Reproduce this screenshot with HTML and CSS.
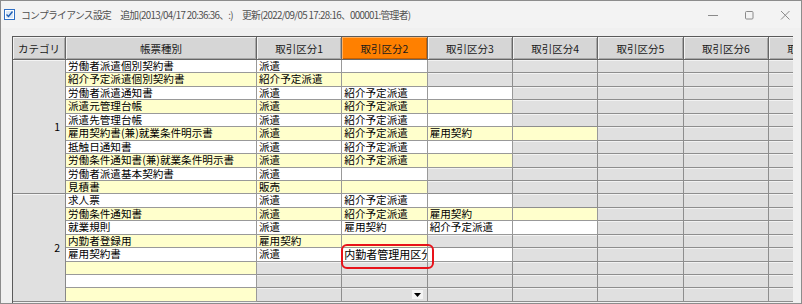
FILE: index.html
```html
<!DOCTYPE html>
<html lang="ja">
<head>
<meta charset="utf-8">
<title>コンプライアンス設定</title>
<link rel="stylesheet" href="styles.css">
</head>
<body>
<div class="window">
  <div class="titlebar">
    <svg class="app-icon" width="11" height="11" viewBox="0 0 11 11">
      <rect x="0.5" y="0.5" width="10" height="10" fill="#ffffff" stroke="#2f6fc4"/>
      <rect x="2" y="2" width="7" height="7" fill="#dbe8f7"/>
      <path d="M2.5 5.5 L4.5 7.5 L8.5 2.5" fill="none" stroke="#1f5fb4" stroke-width="1.4"/>
    </svg>
    <span class="title">コンプライアンス設定　追加(2013/04/17 20:36:36、:)　更新(2022/09/05 17:28:16、000001:管理者)</span>
    <div class="controls">
      <svg width="10" height="10" viewBox="0 0 10 10"><path d="M0 5.5 H10" stroke="#8a8a8a" stroke-width="1"/></svg>
      <svg width="10" height="10" viewBox="0 0 10 10"><rect x="1.5" y="1.5" width="7.5" height="7.5" rx="1" fill="none" stroke="#8a8a8a"/></svg>
      <svg width="10" height="10" viewBox="0 0 10 10"><path d="M1 1 L9.5 9.5 M9.5 1 L1 9.5" stroke="#8a8a8a" stroke-width="1"/></svg>
    </div>
  </div>
  <div class="content">
    <div class="gridwrap">
      <div class="grid">
        <div class="h">カテゴリ</div>
        <div class="h">帳票種別</div>
        <div class="h">取引区分1</div>
        <div class="h hi">取引区分2</div>
        <div class="h">取引区分3</div>
        <div class="h">取引区分4</div>
        <div class="h">取引区分5</div>
        <div class="h">取引区分6</div>
        <div class="h">取引区分7</div>

        <div class="cat cat1">1</div>
        <div class="cat cat2">2</div>

        <div class="c w">労働者派遣個別契約書</div><div class="c w">派遣</div><div class="c w"></div><div class="c g"></div><div class="c g"></div><div class="c g"></div><div class="c g"></div><div class="c g"></div>
        <div class="c y">紹介予定派遣個別契約書</div><div class="c y">紹介予定派遣</div><div class="c y"></div><div class="c g"></div><div class="c g"></div><div class="c g"></div><div class="c g"></div><div class="c g"></div>
        <div class="c w">労働者派遣通知書</div><div class="c w">派遣</div><div class="c w">紹介予定派遣</div><div class="c w"></div><div class="c g"></div><div class="c g"></div><div class="c g"></div><div class="c g"></div>
        <div class="c y">派遣元管理台帳</div><div class="c y">派遣</div><div class="c y">紹介予定派遣</div><div class="c y"></div><div class="c g"></div><div class="c g"></div><div class="c g"></div><div class="c g"></div>
        <div class="c w">派遣先管理台帳</div><div class="c w">派遣</div><div class="c w">紹介予定派遣</div><div class="c w"></div><div class="c g"></div><div class="c g"></div><div class="c g"></div><div class="c g"></div>
        <div class="c y">雇用契約書(兼)就業条件明示書</div><div class="c y">派遣</div><div class="c y">紹介予定派遣</div><div class="c y">雇用契約</div><div class="c y"></div><div class="c g"></div><div class="c g"></div><div class="c g"></div>
        <div class="c w">抵触日通知書</div><div class="c w">派遣</div><div class="c w">紹介予定派遣</div><div class="c w"></div><div class="c g"></div><div class="c g"></div><div class="c g"></div><div class="c g"></div>
        <div class="c y">労働条件通知書(兼)就業条件明示書</div><div class="c y">派遣</div><div class="c y">紹介予定派遣</div><div class="c y"></div><div class="c g"></div><div class="c g"></div><div class="c g"></div><div class="c g"></div>
        <div class="c w">労働者派遣基本契約書</div><div class="c w">派遣</div><div class="c w"></div><div class="c g"></div><div class="c g"></div><div class="c g"></div><div class="c g"></div><div class="c g"></div>
        <div class="c y">見積書</div><div class="c y">販売</div><div class="c y"></div><div class="c g"></div><div class="c g"></div><div class="c g"></div><div class="c g"></div><div class="c g"></div>

        <div class="c w">求人票</div><div class="c w">派遣</div><div class="c w">紹介予定派遣</div><div class="c w"></div><div class="c g"></div><div class="c g"></div><div class="c g"></div><div class="c g"></div>
        <div class="c y">労働条件通知書</div><div class="c y">派遣</div><div class="c y">紹介予定派遣</div><div class="c y">雇用契約</div><div class="c y"></div><div class="c g"></div><div class="c g"></div><div class="c g"></div>
        <div class="c w">就業規則</div><div class="c w">派遣</div><div class="c w">雇用契約</div><div class="c w">紹介予定派遣</div><div class="c w"></div><div class="c g"></div><div class="c g"></div><div class="c g"></div>
        <div class="c y">内勤者登録用</div><div class="c y">雇用契約</div><div class="c y"></div><div class="c g"></div><div class="c g"></div><div class="c g"></div><div class="c g"></div><div class="c g"></div>
        <div class="c w">雇用契約書</div><div class="c w">派遣</div><div class="c w edit">内勤者管理用区分</div><div class="c w"></div><div class="c g"></div><div class="c g"></div><div class="c g"></div><div class="c g"></div>
        <div class="c y"></div><div class="c g"></div><div class="c g"></div><div class="c g"></div><div class="c g"></div><div class="c g"></div><div class="c g"></div><div class="c g"></div>
        <div class="c w"></div><div class="c g"></div><div class="c g"></div><div class="c g"></div><div class="c g"></div><div class="c g"></div><div class="c g"></div><div class="c g"></div>
        <div class="c y"></div><div class="c g"></div><div class="c g dd"><span class="ddbtn"><svg width="7" height="4" viewBox="0 0 7 4"><path d="M0 0 H7 L3.5 4 Z" fill="#000"/></svg></span></div><div class="c g"></div><div class="c g"></div><div class="c g"></div><div class="c g"></div><div class="c g"></div>
      </div>
      <div class="callout"></div>
    </div>
  </div>
</div>
</body>
</html>
```

FILE: styles.css
```css
* { box-sizing: border-box; }
html, body { margin: 0; padding: 0; }
body {
  width: 802px;
  height: 304px;
  overflow: hidden;
  background: #f0f0f0;
  font-family: "Noto Sans CJK JP", "Noto Sans", sans-serif;
}
.window {
  width: 802px;
  height: 304px;
  border: 1px solid #8c8c8c;
  background: #f0f0f0;
  display: flex;
  flex-direction: column;
}
.titlebar {
  height: 27px;
  flex: none;
  display: flex;
  align-items: center;
  padding-left: 3px;
  background: #f3f3f3;
}
.app-icon { flex: none; margin-top: -1px; }
.title {
  margin-left: 6px;
  font-size: 9.8px;
  color: #505050;
  white-space: nowrap;
  letter-spacing: -0.7px;
}
.controls {
  margin-left: auto;
  display: flex;
  align-items: center;
  gap: 26px;
  padding-right: 11px;
}
.controls svg { display: block; }
.content {
  flex: 1;
  min-height: 0;
  padding: 8px 0 0 11px;
  display: flex;
}
.gridwrap {
  position: relative;
  width: 781px;
  height: 100%;
  overflow: hidden;
  border-top: 1px solid #5a5a5a;
  border-left: 1px solid #5a5a5a;
  background: #f0f0f0;
}
.grid {
  display: grid;
  grid-template-columns: 53px 191px repeat(7, 85.33px);
  grid-template-rows: 23px repeat(18, 13.45px);
  width: max-content;
  font-size: 10.6px;
  color: #000;
}
.h {
  background: #d6d6d6;
  border-right: 1px solid #666;
  border-bottom: 1px solid #666;
  box-shadow: inset 1px 1px 0 #f2f2f2, inset -1px -1px 0 #a8a8a8;
  display: flex;
  align-items: center;
  justify-content: center;
  font-size: 10.5px;
  color: #1a1a1a;
  white-space: nowrap;
}
.h.hi { background: #ff8000; box-shadow: inset 1px 1px 0 #ffb060, inset -1px -1px 0 #c86000; }
.cat {
  grid-column: 1;
  background: #e0e0e0;
  border-right: 1px solid #888;
  border-bottom: 1px solid #888;
  box-shadow: inset 0 1px 0 #f4f4f4;
  display: flex;
  align-items: center;
  justify-content: flex-end;
  padding-right: 5px;
  font-size: 10.5px;
}
.cat1 { grid-row: 2 / span 10; }
.cat2 { grid-row: 12 / span 8; }
.c {
  border-right: 1px solid #999;
  border-bottom: 1px solid #999;
  padding: 0 2px;
  line-height: 12px;
  white-space: nowrap;
}
.w { background: #ffffff; }
.y { background: #ffffcc; }
.g {
  background: #e0e0e0;
  border-right-color: #8e8e8e;
  border-bottom-color: #8e8e8e;
  box-shadow: inset 0 1px 0 #f2f2f2;
}
.edit { font-size: 11px; overflow: hidden; text-overflow: clip; }
.dd {
  display: flex;
  align-items: center;
  justify-content: flex-end;
  padding-right: 4px;
}
.ddbtn {
  width: 11px;
  height: 9px;
  background: #f4f4f4;
  display: flex;
  align-items: center;
  justify-content: center;
}
.ddbtn svg { display: block; }
.callout {
  position: absolute;
  left: 328px;
  top: 207px;
  width: 93px;
  height: 25px;
  border: 2.5px solid #e8121a;
  border-radius: 6px;
}
```
